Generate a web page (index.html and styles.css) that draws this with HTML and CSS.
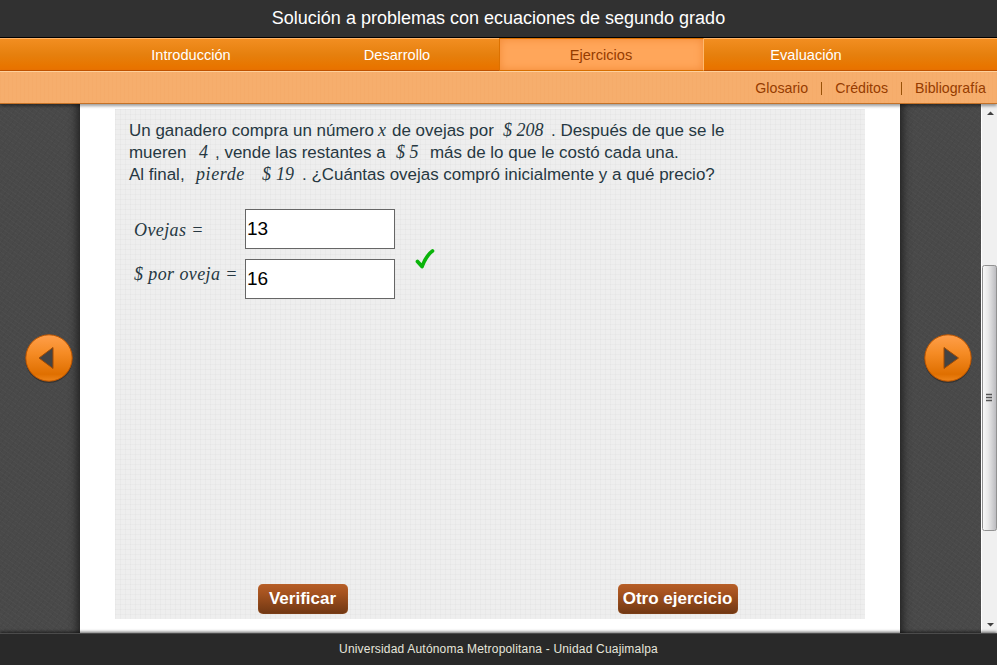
FILE: index.html
```html
<!DOCTYPE html>
<html lang="es">
<head>
<meta charset="utf-8">
<title>Solución a problemas con ecuaciones de segundo grado</title>
<link rel="stylesheet" href="styles.css">
</head>
<body>
<header class="title"><h1>Solución a problemas con ecuaciones de segundo grado</h1></header>
<nav class="tabs">
  <a class="tab intro">Introducción</a>
  <a class="tab">Desarrollo</a>
  <a class="tab active">Ejercicios</a>
  <a class="tab">Evaluación</a>
</nav>
<nav class="links"><a>Glosario</a><i></i><a>Créditos</a><i></i><a>Bibliografía</a></nav>
<div class="stage">
  <aside class="side left">
    <button class="round" aria-label="Anterior"><svg width="48" height="50" viewBox="0 0 48 50"><defs><linearGradient id="o" x1="0" y1="0" x2="0" y2="1"><stop offset="0" stop-color="#ff9f4b"/><stop offset=".4" stop-color="#f58b24"/><stop offset=".85" stop-color="#df6f00"/><stop offset="1" stop-color="#ee851b"/></linearGradient></defs><circle cx="24" cy="25.500" r="23.500" fill="#2b2b2b" opacity=".7"/><circle cx="24" cy="24" r="23.200" fill="url(#o)" stroke="#bd5500"/><path d="M14 24L28 13.500V34.500Z" fill="#434343" stroke="#a04b05"/></svg></button>
  </aside>
  <main class="page">
    <section class="exercise">
      <div class="problem">
        <p><span class="s1">Un ganadero compra un número</span><em class="s2">x</em><span class="s3">de ovejas por</span><em class="s4">$ 208</em><span>. Después de que se le</span></p>
        <p><span class="t1">mueren</span><em class="t2">4</em><span class="t3">, vende las restantes a</span><em class="t4">$ 5</em><span>más de lo que le costó cada una.</span></p>
        <p><span class="u1">Al final,</span><em class="u2">pierde</em><em class="u3">$ 19</em><span>. ¿Cuántas ovejas compró inicialmente y a qué precio?</span></p>
      </div>
      <div class="answers">
        <div class="labels"><em>Ovejas =</em><em>$ por oveja =</em></div>
        <div class="fields"><input value="13" aria-label="Ovejas"><input value="16" aria-label="Pesos por oveja"></div>
        <svg class="check" width="20" height="22" viewBox="0 0 20 22"><path d="M2.500 12.500L7 17.500C9.500 11 12.500 5.500 17.500 2" fill="none" stroke="#0ab40a" stroke-width="3.700" stroke-linecap="round" stroke-linejoin="round"/></svg>
      </div>
      <div class="actions"><button class="verify">Verificar</button><button class="other">Otro ejercicio</button></div>
    </section>
  </main>
  <aside class="side right">
    <button class="round" aria-label="Siguiente"><svg width="48" height="50" viewBox="0 0 48 50"><circle cx="24" cy="25.500" r="23.500" fill="#2b2b2b" opacity=".7"/><circle cx="24" cy="24" r="23.200" fill="url(#o)" stroke="#bd5500"/><path d="M34.500 24L20 13.500V34.500Z" fill="#434343" stroke="#a04b05"/></svg></button>
  </aside>
  <div class="scroll">
    <svg width="15" height="528" viewBox="0 0 15 528"><defs><linearGradient id="g"><stop offset="0" stop-color="#fafafa"/><stop offset=".4" stop-color="#e9e9e9"/><stop offset="1" stop-color="#b9b9bd"/></linearGradient></defs><path d="M5 11L8.500 7.500L12 11Z" fill="#404040"/><rect x=".5" y="161.500" width="14" height="265" rx="2" fill="url(#g)" stroke="#929292"/><path d="M4 290.500h6M4 293.500h6M4 296.500h6" stroke="#555" stroke-width="1.500"/><path d="M5 519L8.500 522.500L12 519Z" fill="#404040"/></svg>
  </div>
</div>
<footer>Universidad Autónoma Metropolitana - Unidad Cuajimalpa</footer>
</body>
</html>
```
FILE: styles.css
```css
* { box-sizing: border-box; }
body { margin: 0; width: 997px; height: 665px; overflow: hidden; display: flex; flex-direction: column; font-family: "Liberation Sans", Arial, sans-serif; }
.title { height: 38px; background: #313131; border-bottom: 1px solid #000; display: flex; justify-content: center; }
h1 { margin: 0; color: #fff; font-size: 18px; font-weight: 400; line-height: 36px; white-space: nowrap; }
.tabs { height: 33px; display: grid; grid-template-columns: 295px 204px 205px 204px; border-top: 1px solid #ffb366; border-bottom: 1px solid #c35400; background: linear-gradient(#f28e21, #e6800e 50%, #e87600 85%, #e87100); }
.tab { color: #fff; font-size: 14.600px; line-height: 32px; text-align: center; }
.intro { padding-left: 87px; }
.active { color: #963c00; margin-top: -1px; height: 33px; line-height: 32px; padding-right: 1px; border: 1px solid #dc7100; border-right: 1px solid #ffb96f; box-shadow: inset 0 0 8px #f38a36; background: #ffa65a; }
.links { height: 33px; display: flex; justify-content: flex-end; align-items: center; gap: 13px; padding: 0 11px 0 0; color: #963c00; font-size: 14.200px; border-top: 1px solid #ffd09b; border-bottom: 1px solid #c47228; background: repeating-linear-gradient(90deg, #ee9b5520 0 1px, transparent 1px 4px), #f6ae6d; position: relative; box-shadow: 0 2px 3px #0006; }
.links i { width: 1px; height: 13px; margin-top: 2px; background: #985208; }
.stage { height: 529px; display: grid; grid-template-columns: 80px 820px 81px 16px; background: #fff; }
.side { background: repeating-linear-gradient(35deg, #ffffff05 0 1px, transparent 1px 4px), repeating-linear-gradient(125deg, #00000009 0 1px, transparent 1px 5px), #494949; padding-top: 230px; }
.left { padding-left: 25px; box-shadow: inset -9px 0 8px -6px #222; }
.right { padding-left: 24px; box-shadow: inset 9px 0 8px -6px #222; }
.round { display: block; border: 0; padding: 0; background: none; }
.round svg { display: block; }
.page { background: #fff; padding: 5px 35px; }
.exercise { height: 510px; display: flex; flex-direction: column; background: repeating-linear-gradient(90deg, #00000005 0 1px, transparent 1px 5px), repeating-linear-gradient(#00000005 0 1px, transparent 1px 5px), #eeeeee; color: #263842; }
.problem { padding: 10px 0 0 14px; height: 100px; font-size: 16.970px; }
.problem p { margin: 0; display: flex; height: 22px; line-height: 22px; white-space: nowrap; }
.problem span { line-height: 24px; }
em { font-family: "Liberation Serif", serif; font-size: 18px; font-style: italic; }
.s1 { width: 249px; } .s2 { width: 14px; } .s3 { width: 111px; } .s4 { width: 48px; }
.t1 { width: 70px; } .t2 { width: 16px; } .t3 { width: 181px; } .t4 { width: 34px; }
.u1 { width: 67px; } .u2 { width: 66px; letter-spacing: .6px; } .u3 { width: 40px; letter-spacing: .2px; }
.answers { display: flex; padding-left: 19px; }
.labels { width: 111px; padding-top: 10px; }
.labels em { display: block; height: 44px; line-height: 23px; font-size: 18px; letter-spacing: .4px; white-space: nowrap; }
.fields { display: flex; flex-direction: column; gap: 10px; }
input { width: 150px; height: 40px; border: 1px solid #666; background: #fff; color: #000; font: 19px "Liberation Sans", Arial, sans-serif; padding: 0 1px; }
.check { margin: 40px 0 0 20px; }
.actions { display: flex; gap: 270px; margin-top: auto; padding: 0 0 5px 143px; }
.actions button { height: 30px; border: 0; border-radius: 5px; background: linear-gradient(#b65e27, #a65320 30%, #6f3713); color: #fff; font: bold 17px "Liberation Sans", Arial, sans-serif; padding: 0 1px 0 0; white-space: nowrap; box-shadow: inset 0 0 1px #c9783f; }
.actions .verify { width: 90px; }
.actions .other { width: 120px; }
.scroll { background: #f0f0f0; border-left: 1px solid #fff; }
.scroll svg { display: block; }
footer { height: 32px; position: relative; background: #292929; border-top: 1px solid #4b4b4b; box-shadow: 0 -1px 3px #0009; color: #e6e6dc; font-size: 12px; letter-spacing: .187px; line-height: 31px; text-align: center; }
```
